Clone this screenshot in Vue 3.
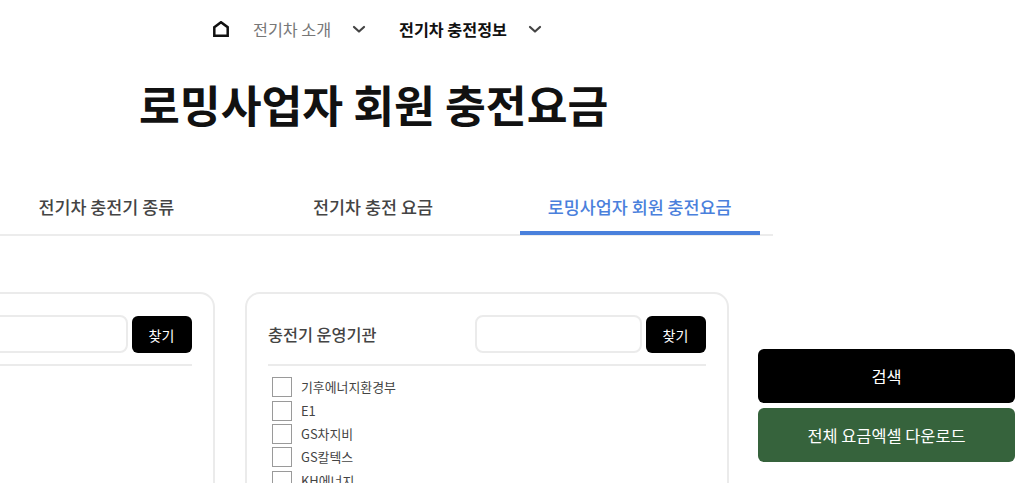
<script setup>
const operators = ['기후에너지환경부', 'E1', 'GS차지비', 'GS칼텍스', 'KH에너지']
</script>

<template>
  <div class="page">
    <nav class="crumbs">
      <svg class="home" viewBox="0 0 16 16" width="16" height="16" aria-hidden="true">
        <path d="M1.3 6.2 8 1.2l6.7 5v8.6H1.3z" fill="none" stroke="#111" stroke-width="2.5" stroke-linejoin="miter" />
      </svg>
      <span class="crumb muted">전기차 소개</span>
      <svg class="chev first" viewBox="0 0 14 9" width="14" height="9" aria-hidden="true">
        <path d="M2 2l5 4.5L12 2" fill="none" stroke="#444" stroke-width="2.2" stroke-linecap="round" stroke-linejoin="round" />
      </svg>
      <span class="crumb strong">전기차 충전정보</span>
      <svg class="chev second" viewBox="0 0 14 9" width="14" height="9" aria-hidden="true">
        <path d="M2 2l5 4.5L12 2" fill="none" stroke="#444" stroke-width="2.2" stroke-linecap="round" stroke-linejoin="round" />
      </svg>
    </nav>

    <h1 class="title">로밍사업자 회원 충전요금</h1>

    <div class="tabs">
      <a class="tab">전기차 충전기 종류</a>
      <a class="tab">전기차 충전 요금</a>
      <a class="tab active">로밍사업자 회원 충전요금</a>
    </div>

    <div class="filters">
      <section class="panel">
        <header class="panel-head">
          <h2 class="panel-title">충전사업자</h2>
          <input class="search" type="text" />
          <button class="find">찾기</button>
        </header>
      </section>

      <section class="panel">
        <header class="panel-head">
          <h2 class="panel-title">충전기 운영기관</h2>
          <input class="search" type="text" />
          <button class="find">찾기</button>
        </header>
        <ul class="list">
          <li v-for="name in operators" :key="name" class="row">
            <span class="box"></span>
            <span class="label">{{ name }}</span>
          </li>
        </ul>
      </section>

      <div class="actions">
        <button class="action black">검색</button>
        <button class="action green">전체 요금엑셀 다운로드</button>
      </div>
    </div>
  </div>
</template>

<style>
html, body { margin: 0; background: #fff; overflow: hidden; }
</style>

<style scoped>
.page {
  width: 1024px;
  height: 483px;
  overflow: hidden;
  position: relative;
  font-family: "Noto Sans CJK KR", "Noto Sans", sans-serif;
  color: #111;
  background: #fff;
}
.crumbs {
  display: flex;
  align-items: center;
  height: 58px;
  padding-left: 213px;
  box-sizing: border-box;
}
.home { margin-right: 24px; }
.crumb { font-size: 16.2px; line-height: 24px; white-space: nowrap; }
.muted { color: #777; width: 100px; }
.strong { font-weight: 700; color: #111; width: 108px; }
.chev { margin-top: 1px; }
.chev.first { margin-right: 33px; margin-left: -1px; }
.chev.second { margin-left: 21px; }
.title {
  margin: 15px 0 0 139px;
  font-size: 44.4px;
  line-height: 62px;
  font-weight: 700;
  color: #111;
  white-space: nowrap;
}
.tabs {
  display: flex;
  justify-content: space-around;
  align-items: flex-start;
  width: 800px;
  margin: 47px 0 0 -27px;
  height: 54px;
  box-sizing: border-box;
  border-bottom: 2px solid #ececec;
}
.tab {
  width: 240px;
  height: 53px;
  flex: none;
  box-sizing: border-box;
  text-align: center;
  font-size: 17.4px;
  line-height: 50px;
  font-weight: 500;
  color: #444;
  white-space: nowrap;
}
.tab.active {
  color: #4a80dc;
  border-bottom: 4px solid #4a80dc;
}
.filters {
  display: flex;
  align-items: flex-start;
  gap: 30px;
  margin: 56px 0 0 -269.5px;
  width: 1290px;
}
.panel {
  width: 484px;
  height: 400px;
  flex: none;
  box-sizing: border-box;
  border: 2px solid #ebebeb;
  border-radius: 15px;
  padding: 21px 21px 0 21.5px;
}
.panel-head {
  display: flex;
  align-items: center;
  gap: 4px;
  height: 38px;
  border-bottom: 2px solid #ebebeb;
  padding-bottom: 11px;
}
.panel-title {
  margin: 0 auto 0 0;
  font-size: 16.3px;
  line-height: 24px;
  font-weight: 500;
  color: #444;
}
.search {
  width: 167px;
  height: 38px;
  box-sizing: border-box;
  border: 2px solid #ebebeb;
  border-radius: 8px;
  background: #fff;
  padding: 0;
  outline: none;
}
.find {
  width: 60px;
  height: 37px;
  margin-top: 1px;
  border: 0;
  border-radius: 6px;
  background: #000;
  color: #fff;
  font: 400 14px/20px "Noto Sans CJK KR", sans-serif;
  padding: 0;
}
.list {
  list-style: none;
  margin: 9.5px 0 0;
  padding: 0 0 0 4px;
}
.row {
  display: flex;
  align-items: center;
  gap: 9px;
  height: 23.4px;
}
.box {
  width: 20px;
  height: 20px;
  box-sizing: border-box;
  border: 1px solid #9a9a9a;
  flex: none;
}
.label {
  font-size: 12.9px;
  line-height: 20px;
  color: #444;
}
.actions {
  flex: none;
  width: 257px;
  margin: 57px 0 0 -0.5px;
  display: flex;
  flex-direction: column;
  gap: 5px;
}
.action {
  height: 54px;
  border: 0;
  border-radius: 6px;
  color: #fff;
  font: 400 16.4px/24px "Noto Sans CJK KR", sans-serif;
  padding: 0;
}
.black { background: #000; }
.green { background: #36633c; }
</style>
